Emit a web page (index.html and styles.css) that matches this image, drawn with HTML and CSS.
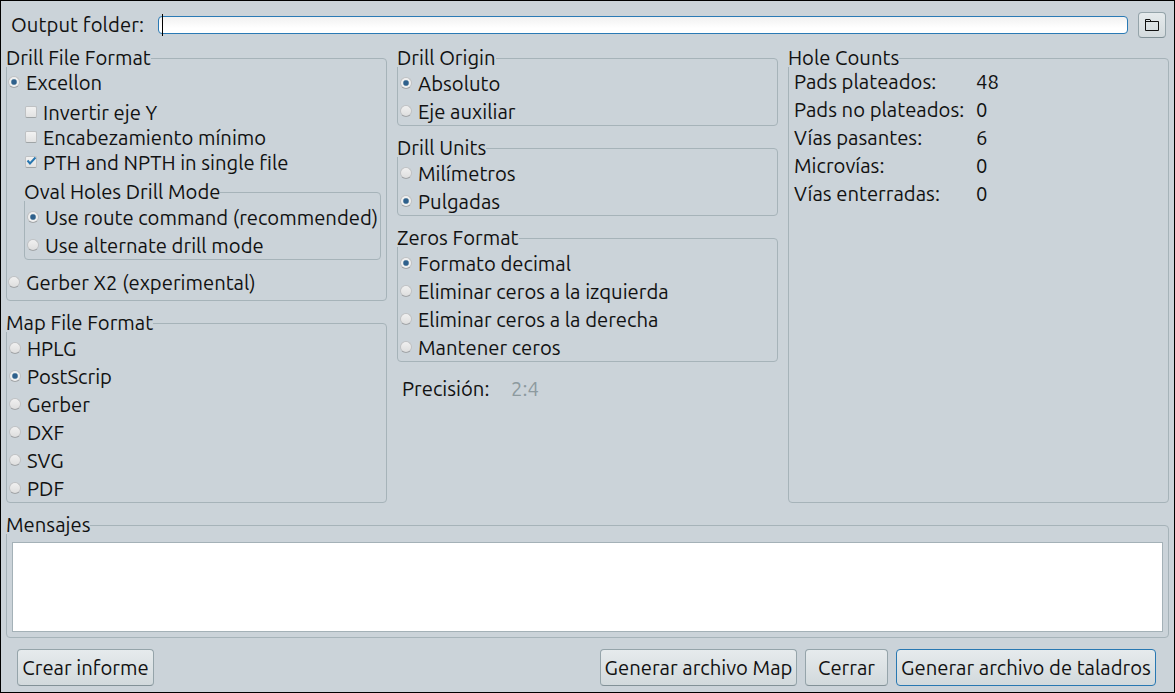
FILE: index.html
```html
<!DOCTYPE html>
<html lang="es">
<head>
<meta charset="utf-8">
<title>Drill Files</title>
<link rel="stylesheet" href="styles.css">
</head>
<body>
<main class="dialog">
  <div class="output">
    <label class="output-label"><span>Output folder:</span></label>
    <div class="field"><i class="caret"></i></div>
    <button class="browse" aria-label="Browse">
      <svg width="16" height="14" viewBox="0 0 16 14"><path d="M1.5 12.5V1.5h4.500l1 2H14.500v9zM1.500 3.500H7" fill="none" stroke="#111" stroke-width="1"/></svg>
    </button>
  </div>

  <div class="columns">
    <div class="column">
      <section class="group drill-format">
        <h2><span>Drill File Format</span></h2>
        <div class="row first"><i class="radio on"></i><span>Excellon</span></div>
        <div class="nested">
          <div class="row check-row"><i class="check"></i><span>Invertir eje Y</span></div>
          <div class="row check-row"><i class="check"></i><span>Encabezamiento mínimo</span></div>
          <div class="row check-row"><i class="check"><svg width="13" height="12" viewBox="0 0 13 12"><path d="M2.500 4.500L5 7.500 10.500 1.500" fill="none" stroke="#2676b0" stroke-width="2"/></svg></i><span>PTH and NPTH in single file</span></div>
          <section class="group oval">
            <h2><span>Oval Holes Drill Mode</span></h2>
            <div class="row"><i class="radio on"></i><span>Use route command (recommended)</span></div>
            <div class="row"><i class="radio"></i><span>Use alternate drill mode</span></div>
          </section>
        </div>
        <div class="row"><i class="radio"></i><span>Gerber X2 (experimental)</span></div>
      </section>

      <section class="group list map">
        <h2><span>Map File Format</span></h2>
        <div class="row"><i class="radio"></i><span>HPLG</span></div>
        <div class="row"><i class="radio on"></i><span>PostScrip</span></div>
        <div class="row"><i class="radio"></i><span>Gerber</span></div>
        <div class="row"><i class="radio"></i><span>DXF</span></div>
        <div class="row"><i class="radio"></i><span>SVG</span></div>
        <div class="row"><i class="radio"></i><span>PDF</span></div>
      </section>
    </div>

    <div class="column">
      <section class="group list">
        <h2><span>Drill Origin</span></h2>
        <div class="row"><i class="radio on"></i><span>Absoluto</span></div>
        <div class="row"><i class="radio"></i><span>Eje auxiliar</span></div>
      </section>
      <section class="group list">
        <h2><span>Drill Units</span></h2>
        <div class="row"><i class="radio"></i><span>Milímetros</span></div>
        <div class="row"><i class="radio on"></i><span>Pulgadas</span></div>
      </section>
      <section class="group list">
        <h2><span>Zeros Format</span></h2>
        <div class="row"><i class="radio on"></i><span>Formato decimal</span></div>
        <div class="row"><i class="radio"></i><span>Eliminar ceros a la izquierda</span></div>
        <div class="row"><i class="radio"></i><span>Eliminar ceros a la derecha</span></div>
        <div class="row"><i class="radio"></i><span>Mantener ceros</span></div>
      </section>
      <div class="precision"><span>Precisión:</span><span class="muted">2:4</span></div>
    </div>

    <section class="group counts">
      <h2><span>Hole Counts</span></h2>
      <div class="count"><span>Pads plateados:</span><span>48</span></div>
      <div class="count"><span>Pads no plateados:</span><span>0</span></div>
      <div class="count"><span>Vías pasantes:</span><span>6</span></div>
      <div class="count"><span>Microvías:</span><span>0</span></div>
      <div class="count"><span>Vías enterradas:</span><span>0</span></div>
    </section>
  </div>

  <section class="group messages">
    <h2><span>Mensajes</span></h2>
    <div class="log"></div>
  </section>

  <footer class="actions">
    <button class="button report"><span>Crear informe</span></button>
    <button class="button make-map"><span>Generar archivo Map</span></button>
    <button class="button close"><span>Cerrar</span></button>
    <button class="button primary"><span>Generar archivo de taladros</span></button>
  </footer>
</main>
</body>
</html>
```
FILE: styles.css
```css
* { box-sizing: border-box; }
body {
  margin: 0;
  font-family: Ubuntu, "Noto Sans", sans-serif;
  font-size: 20.25px;
  color: #111;
}
.dialog {
  width: 1175px;
  height: 693px;
  border: 1px solid #000;
  background: #cbd3d9;
  display: flex;
  flex-direction: column;
  padding: 11px 5px 0;
  overflow: hidden;
}
span { white-space: nowrap; }
.output { display: flex; align-items: center; height: 26px; padding: 0 3px 0 5px; }
.output-label { width: 147px; line-height: 26px; letter-spacing: 0.09px; }
.field {
  width: 970px;
  height: 18px;
  margin-right: 10px;
  border: 1px solid #2a7ab5;
  border-radius: 4px;
  background: linear-gradient(#f1f1f1, #fff 70%);
  position: relative;
}
.caret { position: absolute; left: 3px; top: -3px; width: 1px; height: 22px; background: #000; }
.browse {
  width: 28px;
  height: 26px;
  padding: 0;
  border: 1px solid #95a4aa;
  border-bottom-color: #809096;
  border-radius: 4px;
  background: linear-gradient(#e5eaec, #d3dadd);
  display: flex;
  align-items: center;
  justify-content: center;
}
.columns {
  display: grid;
  grid-template-columns: repeat(3, 381px);
  column-gap: 10px;
  margin-top: 20px;
  height: 445px;
}
.column { display: flex; flex-direction: column; gap: 22px; }
.group { border: 1px solid #a6b3b9; border-radius: 4px; }
.group > h2 {
  width: max-content;
  height: 17px;
  margin: -9px 0 0 -1px;
  background: #cbd3d9;
  font-size: inherit;
  font-weight: 400;
  line-height: 16px;
}
.row { display: flex; align-items: center; height: 28px; padding-left: 2px; line-height: 28px; }
.radio {
  flex: none;
  width: 12px;
  height: 12px;
  margin: -2px 6px 0 -1px;
  border-radius: 50%;
  border: 1px solid #c0c2c4;
  border-bottom-color: #a2a5a8;
  background: linear-gradient(#f0f0f0, #dedede);
}
.radio.on { background: radial-gradient(circle at 50% 50%, #2f608c 0 2.100px, #8eaabd 2.900px, #efefef 3.500px); }
.drill-format { height: 243px; }
.drill-format > .first { margin-top: 2px; }
.nested { padding: 4px 5px 0 17px; }
.check-row { height: 25px; line-height: 24px; padding-left: 1px; }
.check-row span { margin-top: -1px; }
.check {
  flex: none;
  display: flex;
  width: 12px;
  height: 12px;
  margin: -3px 6px 0 0;
  border: 1px solid #bfc1c3;
  border-bottom-color: #9fa4a6;
  border-radius: 2px;
  background: linear-gradient(#f2f2f2, #e2e2e2);
}
.check svg { flex: none; margin: -1px 0 0 -1px; }
.oval { height: 68px; margin: 16px 0 9px; }
.oval .row { padding-left: 3px; }
.oval h2 + .row { margin-top: 3px; }
.list .row { padding-left: 3px; }
.list h2 + .row { margin-top: 3px; }
.list .row:last-child { height: 27px; }
.map { height: 180px; }
.precision { display: grid; grid-template-columns: 109px 1fr; padding-left: 5px; margin-top: -9px; line-height: 28px; }
.muted { color: #8d9a9f; }
.count { display: grid; grid-template-columns: 182px 1fr; padding-left: 5px; height: 28px; line-height: 28px; }
.counts h2 + .count { margin-top: 1px; }
.messages { height: 113px; margin-top: 22px; padding: 0 5px 5px; }
.messages > h2 { margin-left: -6px; }
.log { height: 90px; margin-top: 8px; border: 1px solid #a4b1b7; background: #fff; }
.actions { display: flex; margin-top: 11px; padding-left: 11px; }
.button {
  height: 37px;
  padding: 0;
  border: 1px solid #95a4aa;
  border-bottom-color: #829197;
  border-radius: 4px;
  background: linear-gradient(#e6ebed, #d2d9dc);
  font: inherit;
  color: inherit;
  line-height: 36px;
}
.report { width: 137px; margin-right: auto; }
.make-map { width: 197px; margin-right: 8px; }
.close { width: 83px; margin-right: 8px; }
.primary { width: 260px; margin-right: 13px; border-color: #2878b2; }
```
